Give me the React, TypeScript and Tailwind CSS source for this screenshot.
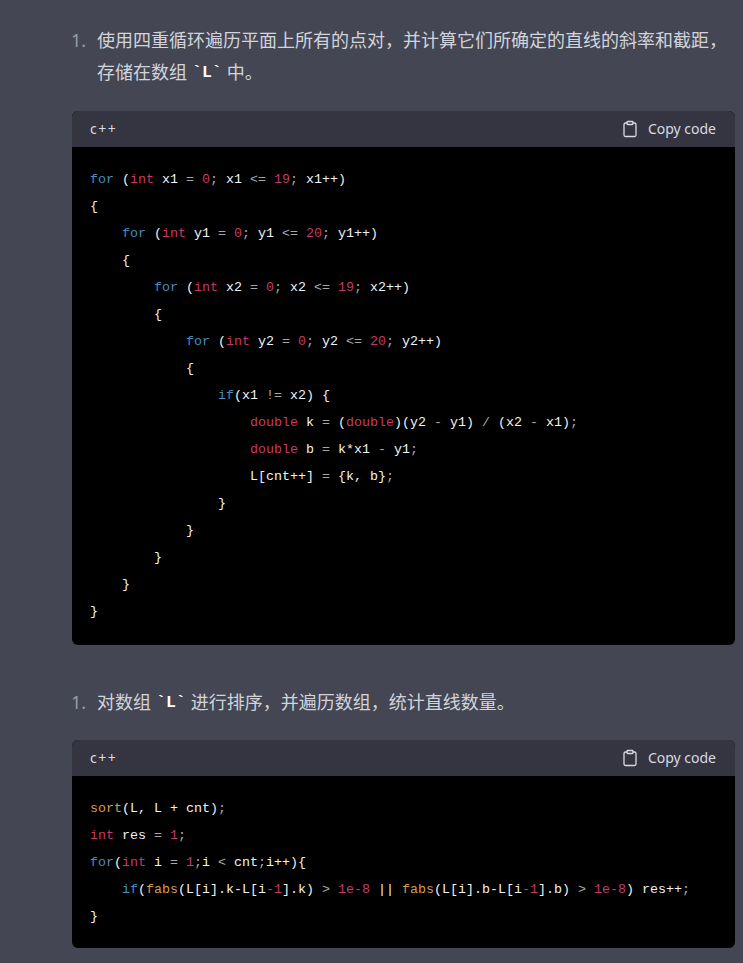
import { Clipboard } from "lucide-react";

const block1 = `for (int x1 = 0; x1 <= 19; x1++)
{
    for (int y1 = 0; y1 <= 20; y1++)
    {
        for (int x2 = 0; x2 <= 19; x2++)
        {
            for (int y2 = 0; y2 <= 20; y2++)
            {
                if(x1 != x2) {
                    double k = (double)(y2 - y1) / (x2 - x1);
                    double b = k*x1 - y1;
                    L[cnt++] = {k, b};
                }
            }
        }
    }
}`;

const block2 = `sort(L, L + cnt);
int res = 1;
for(int i = 1;i < cnt;i++){
    if(fabs(L[i].k-L[i-1].k) > 1e-8 || fabs(L[i].b-L[i-1].b) > 1e-8) res++;
}`;

const re = /(\bfor\b|\bif\b)|(\bint\b|\bdouble\b)|(\bsort\b|\bfabs\b)|(1e-8|-1(?=\])|\b\d+\b)|(;|<=|!=|=| - | \/ | > | < )/g;

function Line({ text }: { text: string }) {
  const out: React.ReactNode[] = [];
  let last = 0;
  let key = 0;
  for (const m of text.matchAll(re)) {
    const i = m.index ?? 0;
    if (i > last) out.push(<span key={key++}>{text.slice(last, i)}</span>);
    const cls = m[1]
      ? "text-[#4a8dbd]"
      : m[3]
        ? "text-[#d69c52]"
        : m[5]
          ? "text-[#a8a8a8]"
          : "text-[#c73a66]";
    out.push(
      <span key={key++} className={cls}>
        {m[0]}
      </span>
    );
    last = i + m[0].length;
  }
  if (last < text.length) out.push(<span key={key++}>{text.slice(last)}</span>);
  return <div className="h-[27px] whitespace-pre">{out}</div>;
}

function CodeBlock({ text, className }: { text: string; className: string }) {
  return (
    <div className={`ml-[-25px] mr-[8px] rounded-md overflow-hidden bg-black ${className}`}>
      <div className="flex h-[36px] items-center justify-between bg-[#343541] pl-[18px] pr-[18px] text-[14px] text-[#d9d9e3] font-['Noto_Sans',sans-serif]">
        <span className="tracking-[1.5px]">c++</span>
        <button className="flex items-center gap-[9px] pr-[1px]">
          <Clipboard size={18} strokeWidth={1.75} />
          <span>Copy code</span>
        </button>
      </div>
      <div className="pl-[18px] pr-4 pt-[19px] font-['Liberation_Mono',monospace] text-[13.33px] leading-[27px] text-[#f2f2f2]">
        {text.split("\n").map((l, i) => (
          <Line key={i} text={l} />
        ))}
      </div>
    </div>
  );
}

function Item({ children }: { children: React.ReactNode }) {
  return (
    <div className="flex">
      <span className="w-[27px] shrink-0 pl-[1px] text-[#9a9ba6]">1.</span>
      <div className="min-w-0 flex-1">{children}</div>
    </div>
  );
}

function Tick() {
  return (
    <code className="pt-[1px] font-['Liberation_Mono',monospace] text-[16.5px] font-bold text-white">`L`</code>
  );
}

export default function App() {
  return (
    <div className="h-[963px] overflow-hidden bg-[#444654] pl-[70px] pt-[24px] font-['Noto_Sans','Noto_Sans_CJK_SC',sans-serif] text-[18px] leading-[32px] text-[#d1d5db]">
      <Item>
        <p className="whitespace-nowrap">使用四重循环遍历平面上所有的点对，并计算它们所确定的直线的斜率和截距，</p>
        <p className="flex gap-[5px]">
          <span>存储在数组</span>
          <Tick />
          <span>中。</span>
        </p>
        <CodeBlock text={block1} className="mt-[22px] pb-[20px]" />
      </Item>
      <div className="mt-[41px]">
        <Item>
          <p className="flex gap-[5px]">
            <span>对数组</span>
            <Tick />
            <span>进行排序，并遍历数组，统计直线数量。</span>
          </p>
          <CodeBlock text={block2} className="mt-[21px] pb-[18px]" />
        </Item>
      </div>
    </div>
  );
}
